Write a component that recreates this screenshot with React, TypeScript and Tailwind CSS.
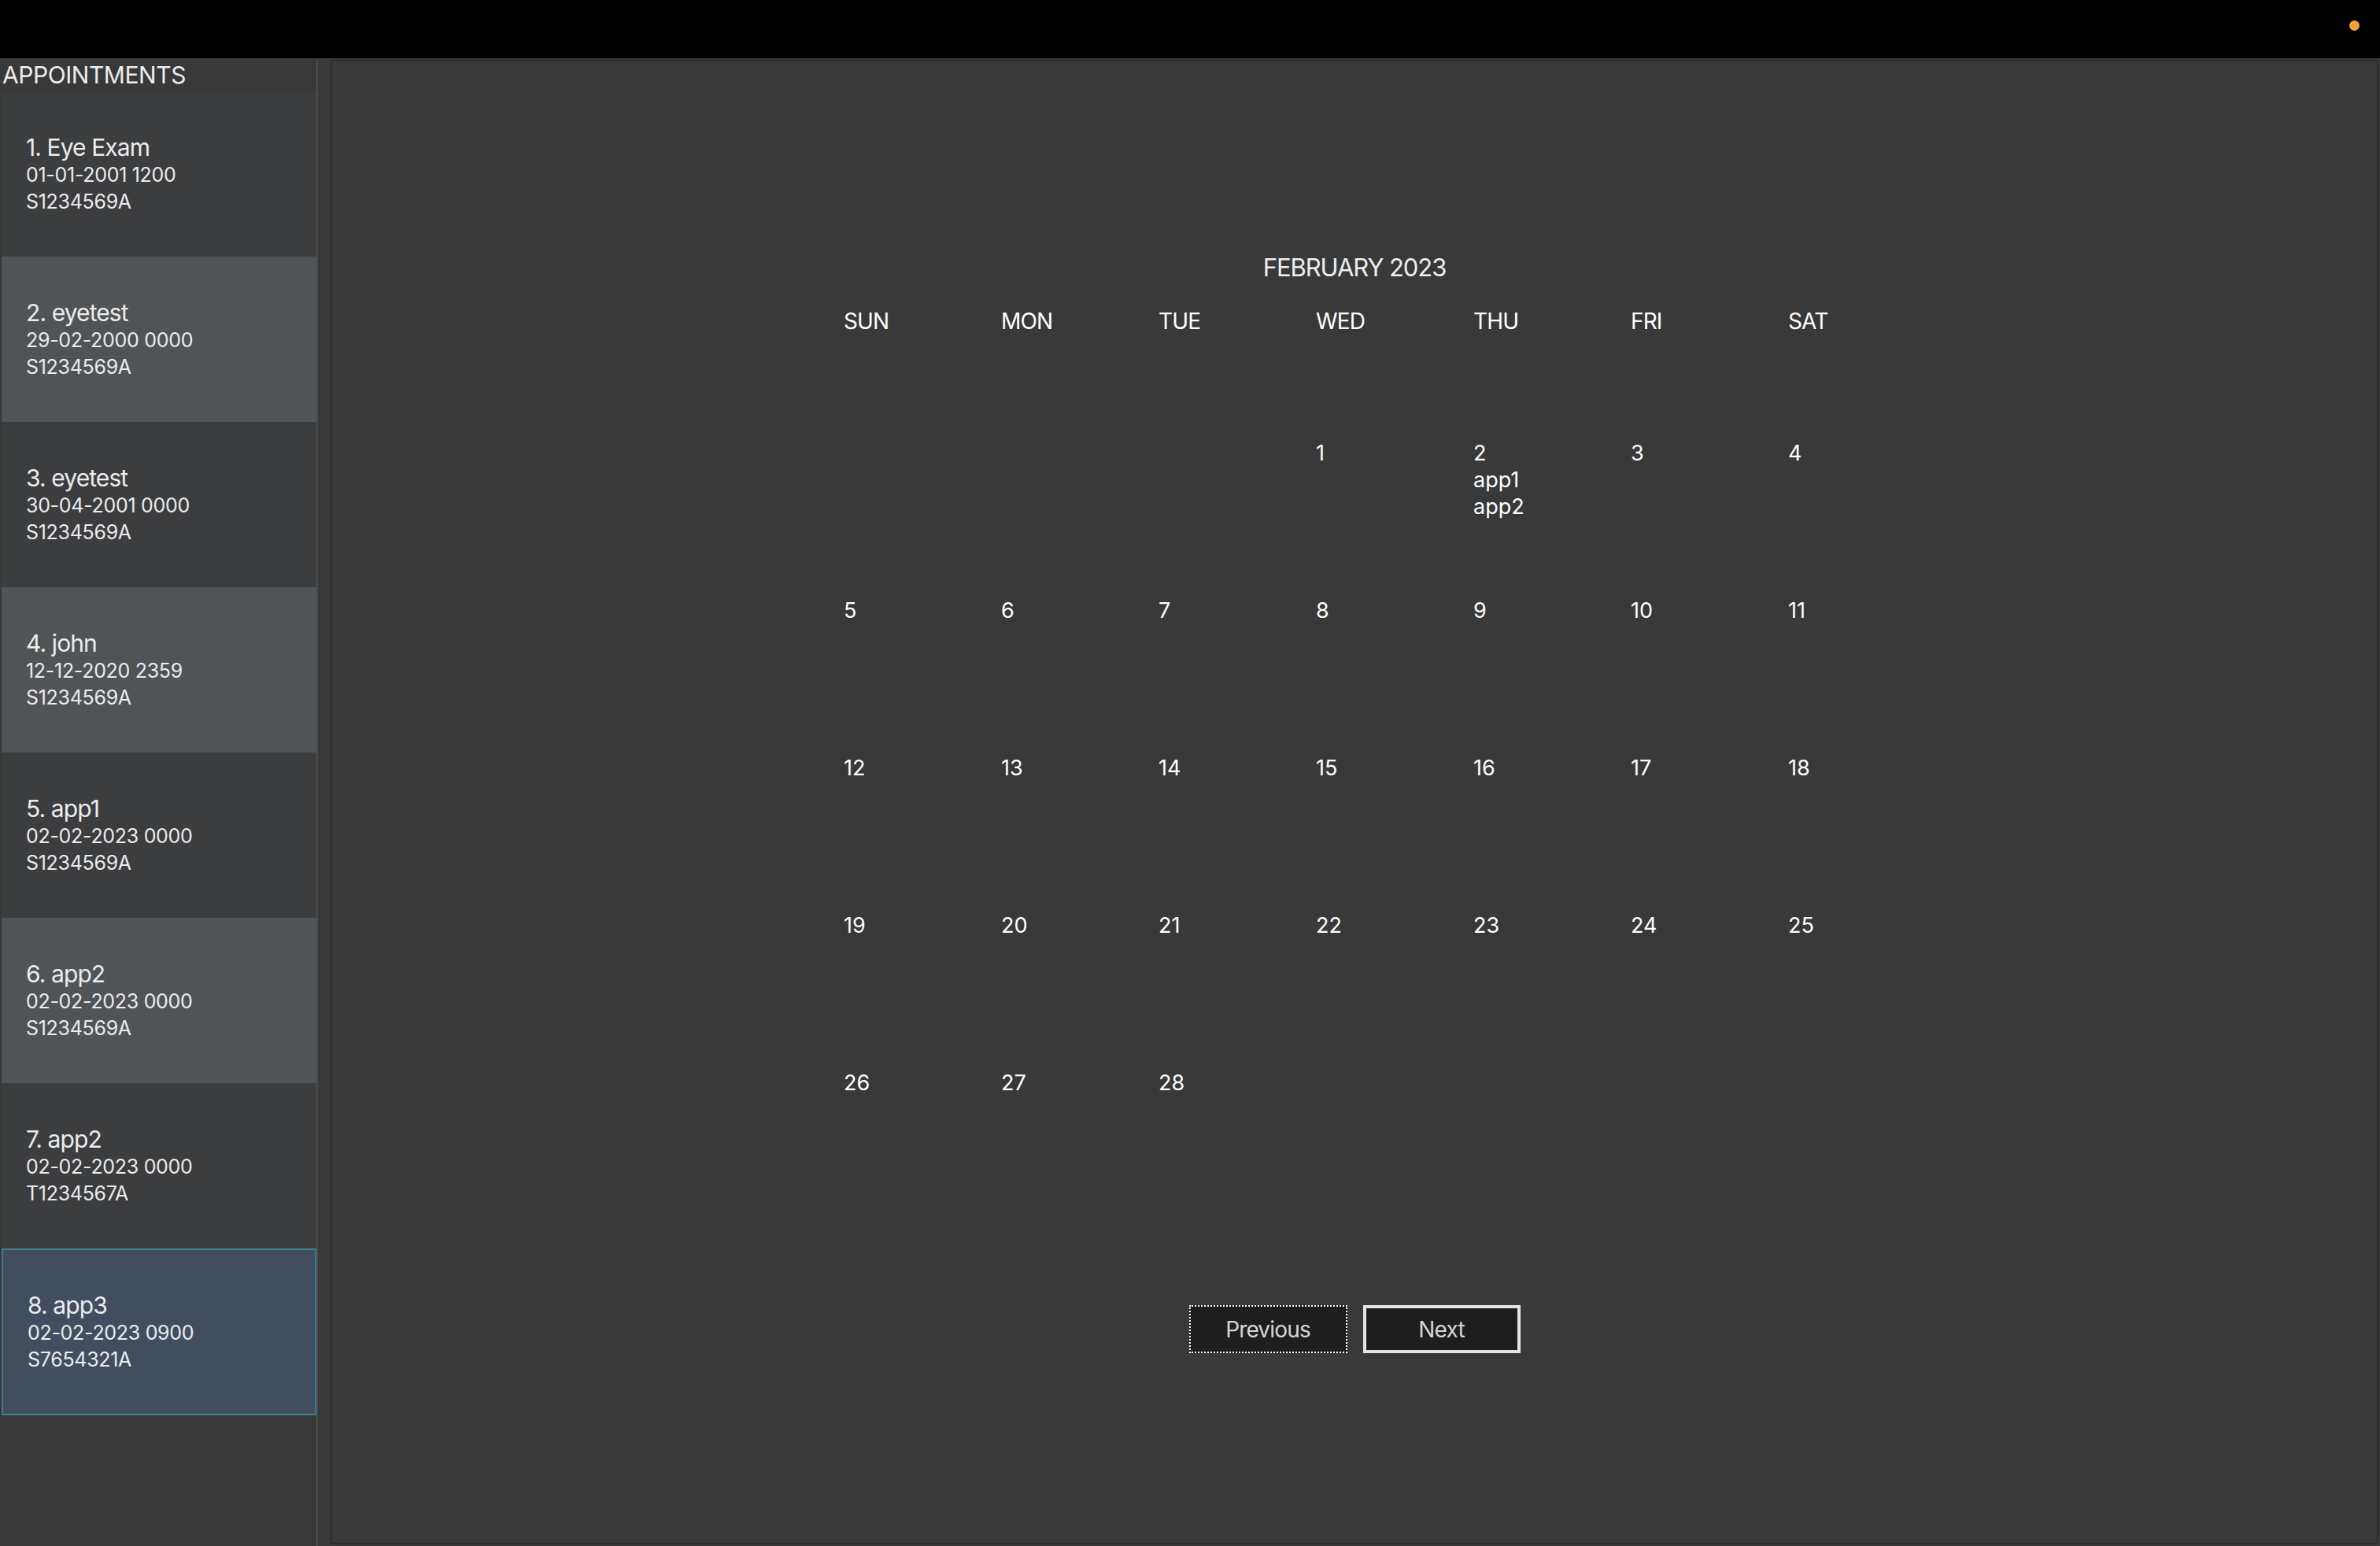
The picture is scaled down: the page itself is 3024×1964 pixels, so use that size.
import React from "react";

interface Appointment {
  id: number;
  name: string;
  when: string;
  nric: string;
}

const APPOINTMENTS: Appointment[] = [
  { id: 1, name: "Eye Exam", when: "01-01-2001 1200", nric: "S1234569A" },
  { id: 2, name: "eyetest", when: "29-02-2000 0000", nric: "S1234569A" },
  { id: 3, name: "eyetest", when: "30-04-2001 0000", nric: "S1234569A" },
  { id: 4, name: "john", when: "12-12-2020 2359", nric: "S1234569A" },
  { id: 5, name: "app1", when: "02-02-2023 0000", nric: "S1234569A" },
  { id: 6, name: "app2", when: "02-02-2023 0000", nric: "S1234569A" },
  { id: 7, name: "app2", when: "02-02-2023 0000", nric: "T1234567A" },
  { id: 8, name: "app3", when: "02-02-2023 0900", nric: "S7654321A" },
];

const DAYS = ["SUN", "MON", "TUE", "WED", "THU", "FRI", "SAT"];

// Feb 2023 starts on a Wednesday
const CELLS: (number | null)[] = [
  ...Array(3).fill(null),
  ...Array.from({ length: 28 }, (_, i) => i + 1),
  ...Array(4).fill(null),
];

const EVENTS: Record<number, string[]> = {
  2: ["app1", "app2"],
};

function AppointmentCard({ appt, selected }: { appt: Appointment; selected: boolean }) {
  const bg = selected
    ? "h-[212px] bg-[#424e5f] border-2 border-[#3b7f90]"
    : appt.id % 2 === 0
    ? "h-[210px] bg-[#505457]"
    : "h-[210px] bg-[#3c3d3f]";

  return (
    <div className={`flex flex-col justify-center pl-[31px] text-[#ececec] ${bg}`}>
      <div className="text-[30px] leading-[36px] tracking-[-0.03em]">
        {appt.id}. {appt.name}
      </div>
      <div className="text-[25px] leading-[34px] tracking-[-0.012em]">{appt.when}</div>
      <div className="text-[25px] leading-[34px] tracking-[-0.012em]">{appt.nric}</div>
    </div>
  );
}

export default function App() {
  return (
    <div className="w-[3024px] h-[1964px] bg-[#393939] flex flex-col overflow-hidden [font-family:Inter,'Noto_Sans',sans-serif]">
      {/* Window bar */}
      <div className="relative h-[74px] bg-black shrink-0">
        <span className="absolute right-[26px] top-[26px] w-[13px] h-[13px] rounded-full bg-[#f2a33c]" />
      </div>

      <div className="flex flex-1 min-h-0">
        {/* Appointment list */}
        <aside className="w-[404px] flex flex-col pl-[2px] border-r-2 border-[#4b4b4b] mt-[2px]">
          <div className="h-[42px] -mt-[2px] -ml-[2px] pl-[3px] text-[30px] leading-[42px] tracking-[-0.015em] text-[#ececec]">
            APPOINTMENTS
          </div>
          <div className="flex flex-col">
            {APPOINTMENTS.map((a) => (
              <AppointmentCard key={a.id} appt={a} selected={a.id === 8} />
            ))}
          </div>
        </aside>

        {/* Calendar */}
        <main className="flex-1 ml-[16px] mt-[2px] mr-[2px] mb-[2px] border-2 border-[#2c2c2c] flex flex-col items-center text-white">
          <h1 className="mt-[242px] text-[31px] leading-[40px] tracking-[-0.035em] text-[#eeeeee]">
            FEBRUARY 2023
          </h1>

          <div className="w-[1400px] mt-[31px]">
            <div className="grid grid-cols-7 h-[168px]">
              {DAYS.map((d) => (
                <div key={d} className="pl-[51px] text-[28px] leading-[34px] tracking-[-0.03em]">
                  {d}
                </div>
              ))}
            </div>
            <div className="grid grid-cols-7 auto-rows-[200px]">
              {CELLS.map((n, i) => (
                <div key={i} className="pl-[51px] text-[27px] leading-[34px]">
                  {n !== null && (
                    <>
                      <div>{n}</div>
                      {(EVENTS[n] || []).map((e) => (
                        <div key={e}>{e}</div>
                      ))}
                    </>
                  )}
                </div>
              ))}
            </div>
          </div>

          <div className="flex gap-[20px] mt-[99px]">
            <button className="w-[201px] h-[61px] bg-[#1e1e1e] border-2 border-dotted border-white text-[28px] tracking-[-0.03em] text-[#d6d6d6]">
              Previous
            </button>
            <button className="w-[200px] h-[61px] bg-[#1e1e1e] border-4 border-[#e4e4e4] text-[28px] tracking-[-0.03em] text-[#d6d6d6]">
              Next
            </button>
          </div>
        </main>
      </div>
    </div>
  );
}
